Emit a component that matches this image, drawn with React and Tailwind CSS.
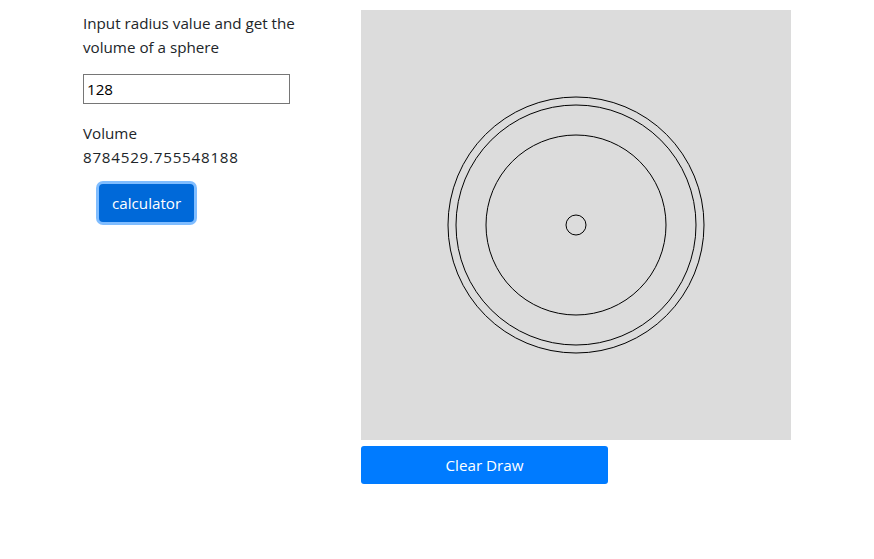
import React, { useState } from 'react';

const font = { fontFamily: '"Open Sans", "Noto Sans", Arial, sans-serif' };

export default function App() {
  const [radius, setRadius] = useState('128');
  const [volume, setVolume] = useState('8784529.755548188');

  const calc = () => {
    const r = parseFloat(radius) || 0;
    setVolume(String((4 / 3) * Math.PI * r * r * r));
  };

  return (
    <div className="flex w-[874px] h-[559px] bg-white text-[#212529] pt-[10px]" style={font}>
      {/* left panel */}
      <div className="w-[361px] pl-[83px] shrink-0">
        <p className="w-[230px] text-[15.2px] leading-6 pt-[1px] mb-[15px]">
          Input radius value and get the volume of a sphere
        </p>
        <input
          type="text"
          value={radius}
          onChange={(e) => setRadius(e.target.value)}
          className="block w-[207px] h-[30px] border border-[#767676] px-[3px] text-[15.2px] text-black outline-none"
        />
        <div className="mt-[17px] text-[15.2px] leading-6">
          <div>Volume</div>
          <div className="tracking-[0.75px]">{volume}</div>
        </div>
        <button
          onClick={calc}
          className="mt-[15px] ml-[16px] h-[38px] px-[13px] rounded-[4px] bg-[#0069d9] text-white text-[15.2px] ring-[3px] ring-[#80bdff]"
        >
          calculator
        </button>
      </div>

      {/* canvas side */}
      <div className="flex flex-col gap-[6px]">
        <div className="w-[430px] h-[430px] bg-[#dcdcdc]">
          <svg width="430" height="430" viewBox="0 0 430 430">
            <g fill="none" stroke="#000" strokeWidth="1">
              <circle cx="215" cy="215" r="128" />
              <circle cx="215" cy="215" r="120" />
              <circle cx="215" cy="215" r="90" />
              <circle cx="215" cy="215" r="10" />
            </g>
          </svg>
        </div>
        <button className="w-[247px] h-[38px] rounded-[3px] bg-[#007bff] text-white text-[15.2px]">
          Clear Draw
        </button>
      </div>
    </div>
  );
}
